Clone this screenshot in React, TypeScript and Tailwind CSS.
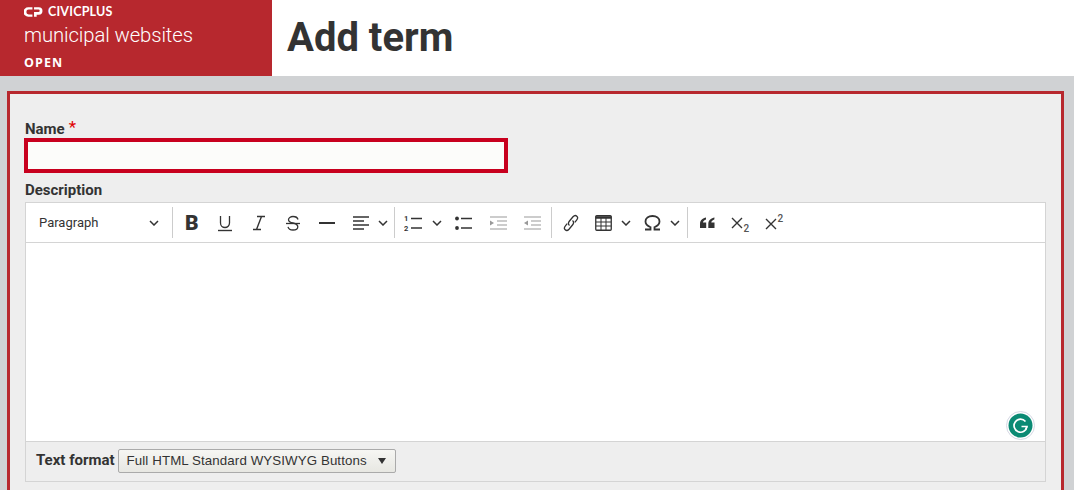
const roboto = "font-['Roboto',sans-serif]";

function Chevron({ className = '' }: { className?: string }) {
  return (
    <svg width="10" height="6" viewBox="0 0 10 6" fill="none" stroke="#333" strokeWidth="1.5" className={`shrink-0 ${className}`}>
      <path d="M1 1l4 4 4-4" />
    </svg>
  );
}

function Sep({ className = '' }: { className?: string }) {
  return <div className={`h-[31px] w-px shrink-0 bg-[#ccc] ${className}`} />;
}

function ToolIcon({ w, className = '', children }: { w: number; className?: string; children: React.ReactNode }) {
  return (
    <svg width={w} height="20" viewBox={`0 0 ${w} 20`} fill="none" stroke="#333" className={`shrink-0 ${className}`}>
      {children}
    </svg>
  );
}

function Toolbar() {
  return (
    <div className="flex h-10 items-center border-b border-[#d4d4d4] bg-white">
      <div className="flex w-[146px] shrink-0 items-center justify-between pr-[13px] pl-[13px] text-[13px] text-[#333]">
        <span>Paragraph</span>
        <Chevron />
      </div>
      <Sep />
      <span className="ml-[12px] w-[13px] shrink-0 text-[21px] leading-5 font-black text-[#333]">B</span>
      {/* underline */}
      <ToolIcon w={16} className="ml-[19px]">
        <path d="M3.500 3v7a4.500 4.500 0 0 0 9 0V3" strokeWidth="1.300" />
        <path d="M1 17.500h14" strokeWidth="1.400" />
      </ToolIcon>
      {/* italic */}
      <ToolIcon w={14} className="ml-[19px]">
        <path d="M5 3.500h8M1 16.500h8M9.500 3.500L4.500 16.500" strokeWidth="1.400" />
      </ToolIcon>
      {/* strike */}
      <ToolIcon w={16} className="ml-[19px]">
        <path d="M13 6.500C12.500 4.500 10.500 3.500 8 3.500 5.500 3.500 3.500 5 3.500 6.800 3.500 8.500 5 9.500 8 10c3 .8 4.800 2 4.800 3.700S11 17 8 17c-2.500 0-4.500-1.200-5-3.200" strokeWidth="1.300" />
        <path d="M1 10.500h14" strokeWidth="1.300" />
      </ToolIcon>
      <div className="ml-[18px] h-[2px] w-4 shrink-0 bg-[#333]" />
      {/* align */}
      <ToolIcon w={17} className="ml-[17px]">
        <path d="M1 4h16M1 8h11M1 12h16M1 16h11" strokeWidth="1.300" />
      </ToolIcon>
      <Chevron className="ml-[9px]" />
      <Sep className="ml-[6px]" />
      {/* numbered list */}
      <ToolIcon w={19} className="ml-[9px]">
        <text x="0" y="8" fontSize="7.500" fontFamily="Roboto, sans-serif" fill="#333" stroke="none" fontWeight="700">1</text>
        <text x="0" y="18" fontSize="7.500" fontFamily="Roboto, sans-serif" fill="#333" stroke="none" fontWeight="700">2</text>
        <path d="M7 5.500h11M7 15h11" strokeWidth="1.500" />
      </ToolIcon>
      <Chevron className="ml-[9px]" />
      {/* bullet list */}
      <ToolIcon w={17} className="ml-[13px]">
        <circle cx="2" cy="5.500" r="1.900" fill="#333" stroke="none" />
        <circle cx="2" cy="15" r="1.900" fill="#333" stroke="none" />
        <path d="M6 5.500h11M6 15h11" strokeWidth="1.500" />
      </ToolIcon>
      {/* indent */}
      <ToolIcon w={18} className="ml-[17px]">
        <path d="M1 4h17M8 8h10M8 12h10M1 16h17" stroke="#999" strokeWidth="1.200" />
        <path d="M1 7.500l4 2.500-4 2.500z" fill="#999" stroke="none" />
      </ToolIcon>
      {/* outdent */}
      <ToolIcon w={18} className="ml-[16px]">
        <path d="M1 4h17M8 8h10M8 12h10M1 16h17" stroke="#999" strokeWidth="1.200" />
        <path d="M5 7.500L1 10l4 2.500z" fill="#999" stroke="none" />
      </ToolIcon>
      <Sep className="ml-[10px]" />
      {/* link */}
      <ToolIcon w={16} className="ml-[11px]">
        <path d="M6.500 12.500c-1.500-1.200-1.200-3 0-4.500l3.500-4.200c1.200-1.300 2.800-1.500 3.800-.6s1 2.500-.2 3.900l-1.800 2.200" strokeWidth="1.300" />
        <path d="M9.500 7.500c1.500 1.200 1.200 3 0 4.500L6 16.200c-1.200 1.300-2.800 1.500-3.800.6s-1-2.500.2-3.900l1.800-2.200" strokeWidth="1.300" />
      </ToolIcon>
      {/* table */}
      <ToolIcon w={17} className="ml-[16px]">
        <rect x="0.750" y="2.750" width="15.500" height="14.500" rx="1" strokeWidth="1.300" />
        <path d="M0.500 4.500h16" strokeWidth="2.500" />
        <path d="M1 9h15M1 13h15M6 5v12M11 5v12" strokeWidth="1" />
      </ToolIcon>
      <Chevron className="ml-[9px]" />
      {/* omega */}
      <ToolIcon w={17} className="ml-[13px]">
        <path d="M1 16.500h5.500v-2.300C3.800 13 1.500 11 1.500 8.500 1.500 5 4.500 3 8.500 3s7 2 7 5.500c0 2.500-2.300 4.500-5 5.700v2.300H16" strokeWidth="1.800" />
      </ToolIcon>
      <Chevron className="ml-[9px]" />
      <Sep className="ml-[7px]" />
      {/* quote */}
      <ToolIcon w={16} className="ml-[11px]">
        <path d="M7 4.500C4 5 1 7 1 11v4h6.200v-5.500H4C4 8 5.500 7 7 6.500zM15.500 4.500C12.500 5 9.300 7 9.300 11v4h6.200v-5.500h-3.200c0-1.500 1.500-2.500 3-3z" fill="#333" stroke="none" />
      </ToolIcon>
      {/* subscript */}
      <ToolIcon w={19} className="ml-[16px]">
        <path d="M1 5l10 10M11 5L1 15" strokeWidth="1.400" />
        <text x="12.500" y="19" fontSize="10" fontWeight="500" fontFamily="Roboto, sans-serif" fill="#555" stroke="none">2</text>
      </ToolIcon>
      {/* superscript */}
      <ToolIcon w={19} className="ml-[15px]">
        <path d="M1 6l10 10M11 6L1 16" strokeWidth="1.400" />
        <text x="12.500" y="9" fontSize="10" fontWeight="500" fontFamily="Roboto, sans-serif" fill="#555" stroke="none">2</text>
      </ToolIcon>
    </div>
  );
}

export default function App() {
  return (
    <div className={`h-[490px] w-[1074px] overflow-hidden bg-[#d0d2d4] ${roboto}`}>
      <header className="flex h-[76px] bg-white">
        <div className="flex w-[272px] flex-col bg-[#b7282e] pl-6 text-white">
          <div className="flex h-[24px] items-center gap-[5px]">
            <svg width="19" height="10" viewBox="0 0 18 9" fill="white">
              <path d="M4 0h4v2.200H4.500a2.300 2.300 0 0 0 0 4.600H8V9H4A4.500 4.500 0 0 1 4 0z" />
              <path d="M9.500 0H14a3.500 3.500 0 0 1 0 7h-2v2H9.500V4.500h4.200a.9.9 0 0 0 0-2.300H9.500z" />
            </svg>
            <span className="font-['Lato',sans-serif] text-[12.500px] leading-none font-bold tracking-[0.2px]">CIVICPLUS</span>
          </div>
          <div className="h-[30px] pt-px text-[20.300px] leading-[20px] font-light tracking-[-0.1px] whitespace-pre">municipal websites</div>
          <div className="font-['Open_Sans',sans-serif] text-[12.500px] leading-[17px] font-bold tracking-[1.100px]">OPEN</div>
        </div>
        <h1 className="pl-[15px] text-[40px] leading-[76px] font-bold text-[#333]">Add term</h1>
      </header>

      <main className="pt-[15px] pl-[7px]">
        <div className="h-[400px] w-[1057px] border-[3px] border-b-0 border-[#b7282e] bg-[#eeeeee] pt-[26px] pl-[14px]">
          <div className="flex items-start pl-px text-[15px] leading-[18px] font-bold text-[#333]">
            Name<span className="ml-1 text-[17px] leading-[14px] font-normal text-[#e00000]">*</span>
          </div>
          <div className="h-[35px] w-[484px] border-4 border-[#c8001e] bg-[#fcfcfa]" />
          <div className="mt-[9px] pl-px text-[15px] leading-[17px] font-bold text-[#333]">Description</div>
          <div className="mt-[3px] ml-px w-[1021px] border border-[#d4d4d4]">
            <Toolbar />
            <div className="relative h-[198px] bg-white">
              <div className="absolute right-[10px] bottom-[1px] flex h-[29px] w-[29px] items-center justify-center rounded-full border border-[#d5d8e4] bg-white">
                <svg width="25" height="25" viewBox="0 0 25 25">
                  <circle cx="12.500" cy="12.500" r="12" fill="#0b8a74" />
                  <path d="M17.500 8.500A6.500 6.500 0 1 0 19 13.500h-5.500" fill="none" stroke="white" strokeWidth="1.700" />
                  <path d="M19 13.500l-1.500 3" fill="none" stroke="white" strokeWidth="1.500" />
                </svg>
              </div>
            </div>
            <div className="flex h-10 items-center border-t border-[#d4d4d4] bg-[#eeeeee] pb-[2px] pl-[10px]">
              <span className="text-[15px] font-bold text-[#333]">Text format</span>
              <div className="ml-[3px] flex h-[24px] w-[278px] items-center justify-between rounded-[2px] border border-[#aaa] bg-[linear-gradient(#f6f6f3,#e7e7e2)] pr-[9px] pl-2 text-[13.300px] text-[#333]">
                <span className="font-['Liberation_Sans',sans-serif] tracking-[0.1px]">Full HTML Standard WYSIWYG Buttons</span>
                <span className="h-0 w-0 border-x-[4.500px] border-t-[6px] border-x-transparent border-t-[#333]" />
              </div>
            </div>
          </div>
        </div>
      </main>
    </div>
  );
}
